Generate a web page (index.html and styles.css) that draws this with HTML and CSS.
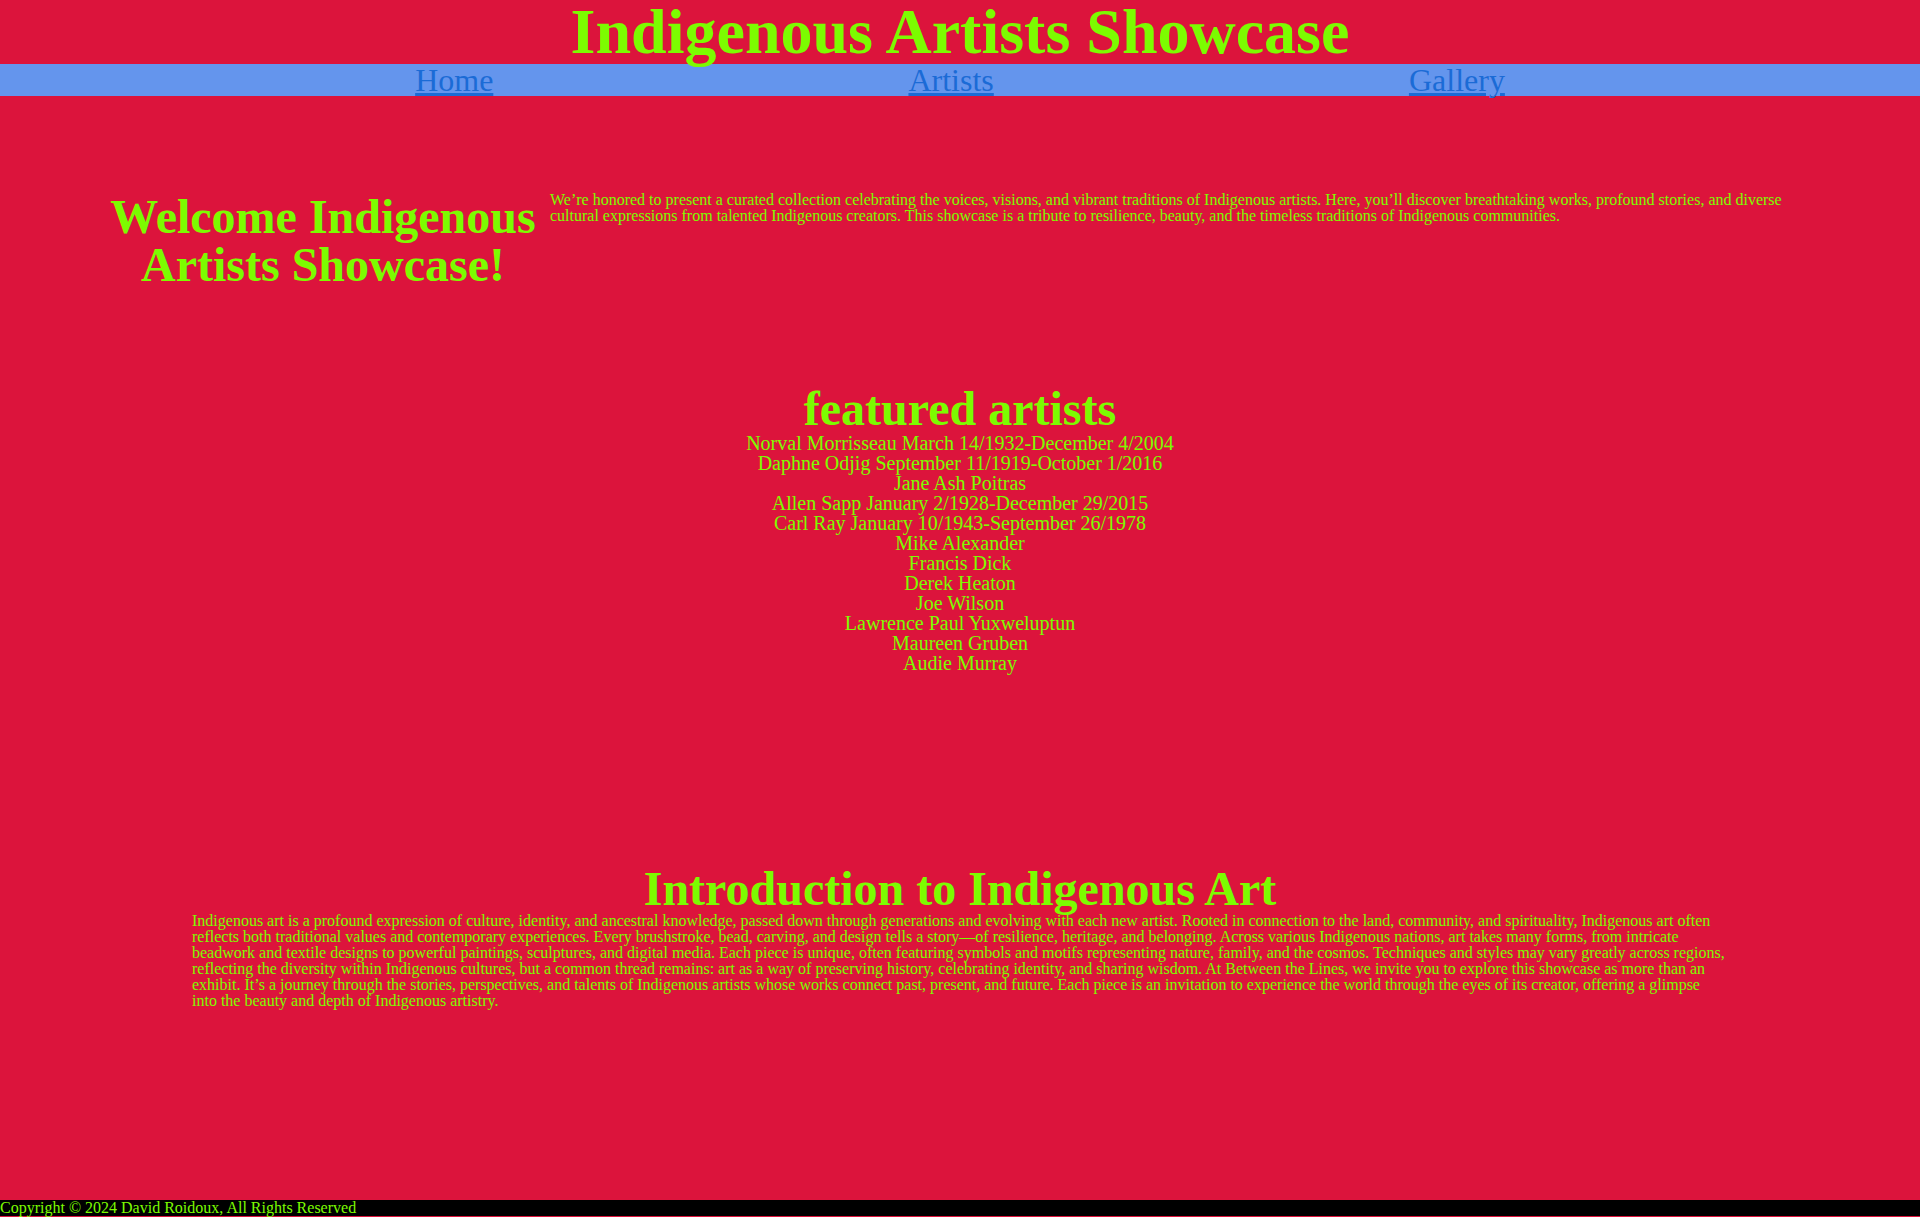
FILE: index.html
```html
<!DOCTYPE html>
<html lang="en">
<head>
<meta charset="utf-8">
<title>Indigenous Artists Showcase</title>
<link rel="stylesheet" href="styles.css">
</head>
<body>
<header class="site-header">
  <h1 class="site-title">Indigenous Artists Showcase</h1>
  <nav class="site-nav">
    <a href="#home">Home</a>
    <a href="#artists">Artists</a>
    <a href="#gallery">Gallery</a>
  </nav>
</header>
<main class="content">
  <section class="welcome">
    <h2 class="welcome-title">Welcome Indigenous Artists Showcase!</h2>
    <p class="welcome-text">We’re honored to present a curated collection celebrating the voices, visions, and vibrant traditions of Indigenous artists. Here, you’ll discover breathtaking works, profound stories, and diverse cultural expressions from talented Indigenous creators. This showcase is a tribute to resilience, beauty, and the timeless traditions of Indigenous communities.</p>
  </section>
  <section class="featured">
    <h2 class="section-title">featured artists</h2>
    <ul class="artist-list">
      <li>Norval Morrisseau March 14/1932-December 4/2004</li>
      <li>Daphne Odjig September 11/1919-October 1/2016</li>
      <li>Jane Ash Poitras</li>
      <li>Allen Sapp January 2/1928-December 29/2015</li>
      <li>Carl Ray January 10/1943-September 26/1978</li>
      <li>Mike Alexander</li>
      <li>Francis Dick</li>
      <li>Derek Heaton</li>
      <li>Joe Wilson</li>
      <li>Lawrence Paul Yuxweluptun</li>
      <li>Maureen Gruben</li>
      <li>Audie Murray</li>
    </ul>
  </section>
  <section class="intro">
    <h2 class="section-title">Introduction to Indigenous Art</h2>
    <p class="intro-text">Indigenous art is a profound expression of culture, identity, and ancestral knowledge, passed down through generations and evolving with each new artist. Rooted in connection to the land, community, and spirituality, Indigenous art often reflects both traditional values and contemporary experiences. Every brushstroke, bead, carving, and design tells a story—of resilience, heritage, and belonging. Across various Indigenous nations, art takes many forms, from intricate beadwork and textile designs to powerful paintings, sculptures, and digital media. Each piece is unique, often featuring symbols and motifs representing nature, family, and the cosmos. Techniques and styles may vary greatly across regions, reflecting the diversity within Indigenous cultures, but a common thread remains: art as a way of preserving history, celebrating identity, and sharing wisdom. At Between the Lines, we invite you to explore this showcase as more than an exhibit. It’s a journey through the stories, perspectives, and talents of Indigenous artists whose works connect past, present, and future. Each piece is an invitation to experience the world through the eyes of its creator, offering a glimpse into the beauty and depth of Indigenous artistry.</p>
  </section>
</main>
<footer class="site-footer">Copyright © 2024 David Roidoux, All Rights Reserved</footer>
</body>
</html>
```
FILE: styles.css
```css
html, body {
  margin: 0;
  padding: 0;
}

body {
  min-height: 100vh;
  display: flex;
  flex-direction: column;
  background: #dc143c;
  color: #7cfc00;
  font-family: "Liberation Serif", "Times New Roman", serif;
  line-height: 1;
}

.site-title {
  margin: 0;
  font-size: 64px;
  line-height: 64px;
  font-weight: bold;
  text-align: center;
}

.site-nav {
  display: flex;
  justify-content: space-evenly;
  height: 32px;
  background: #6495ed;
}

.site-nav a {
  font-size: 32px;
  line-height: 32px;
  color: #1b6bd6;
}

.content {
  flex: 1;
}

.welcome {
  display: flex;
  align-items: flex-start;
  padding: 0 96px;
  margin-top: 96px;
}

.welcome-title {
  flex: 0 0 454px;
  margin: 1px 0 0;
  font-size: 48px;
  line-height: 48px;
  text-align: center;
}

.welcome-text {
  flex: 1;
  margin: 0;
  font-size: 16px;
  line-height: 16px;
}

.featured {
  margin-top: 96px;
  text-align: center;
}

.section-title {
  margin: 0;
  font-size: 48px;
  line-height: 48px;
  text-align: center;
}

.artist-list {
  list-style: none;
  margin: 0;
  padding: 0;
  font-size: 20px;
  line-height: 20px;
}

.intro {
  margin-top: 192px;
}

.intro-text {
  margin: 0 10%;
  font-size: 16px;
  line-height: 16px;
}

.site-footer {
  height: 16px;
  font-size: 16px;
  line-height: 16px;
  background: #000;
  color: #7cfc00;
  margin-bottom: 1px;
}
```
